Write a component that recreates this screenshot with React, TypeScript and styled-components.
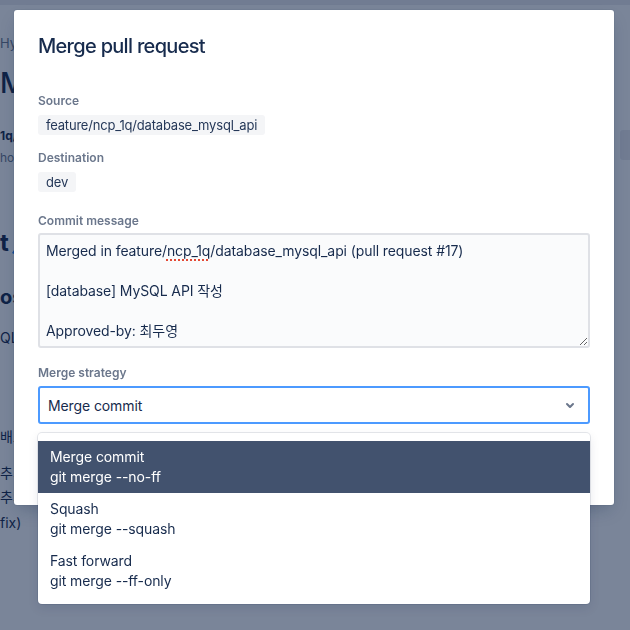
import React from "react";
import styled, { createGlobalStyle } from "styled-components";

const FONT = `Inter, "Noto Sans CJK KR", "Noto Sans", sans-serif`;

const GlobalStyle = createGlobalStyle`
  html, body { margin: 0; padding: 0; height: 100%; overflow: hidden; }
  body {
    font-family: ${FONT};
    color: #172b4d;
    background: #ffffff;
    -webkit-font-smoothing: antialiased;
  }
  * { box-sizing: border-box; }
`;

/* ---------- background page ---------- */

const Page = styled.div`
  height: 630px;
  display: flex;
  flex-direction: column;
  background: #ffffff;
`;

const TopBar = styled.div`
  height: 5px;
  background: #ebecf0;
`;

const Layout = styled.div`
  flex: 1;
  display: flex;
`;

const Main = styled.main`
  flex: 1;
  min-width: 0;
  overflow: hidden;
  display: flex;
  flex-direction: column;
`;

const Aside = styled.aside`
  width: 10px;
  overflow: hidden;
  padding-top: 125px;
`;

const SideButton = styled.div`
  width: 30px;
  height: 30px;
  border-radius: 3px;
  background: #ebecf0;
`;

const BgText = styled.div<{
  $size: number;
  $lh: number;
  $top: number;
  $weight?: number;
  $muted?: boolean;
}>`
  margin-top: ${(p) => p.$top}px;
  font-size: ${(p) => p.$size}px;
  line-height: ${(p) => p.$lh}px;
  font-weight: ${(p) => p.$weight ?? 400};
  color: ${(p) => (p.$muted ? "#6b778c" : "#172b4d")};
  white-space: nowrap;
  display: flex;
  align-items: flex-end;
`;

const Pencil = () => (
  <svg width="10" height="14" viewBox="0 0 10 14" style={{ marginLeft: 1, marginBottom: 3 }}>
    <path d="M2 13 L8 4 L10 6 L4 14 Z" fill="#2684ff" />
  </svg>
);

/* ---------- modal ---------- */

const Overlay = styled.div`
  position: fixed;
  inset: 0;
  background: rgba(9, 30, 66, 0.54);
  display: flex;
  justify-content: center;
  align-items: flex-start;
  padding: 10px 2px 0 0;
`;

const Modal = styled.section`
  width: 600px;
  background: #ffffff;
  border-radius: 3px;
  box-shadow: 0 0 0 1px rgba(9, 30, 66, 0.06), 0 8px 16px -4px rgba(9, 30, 66, 0.25);
  display: flex;
  flex-direction: column;
`;

const Header = styled.header`
  padding: 24px 24px 0;
`;

const Title = styled.h1`
  margin: 0;
  font-size: 20px;
  font-weight: 500;
  line-height: 24px;
  letter-spacing: -0.7px;
  color: #172b4d;
`;

const Body = styled.div`
  padding: 0 24px;
  display: flex;
  flex-direction: column;
`;

const Field = styled.div<{ $top: number }>`
  margin-top: ${(p) => p.$top}px;
  display: flex;
  flex-direction: column;
`;

const Label = styled.label<{ $gap: number }>`
  font-size: 12px;
  font-weight: 600;
  line-height: 16px;
  color: #6b778c;
  margin-bottom: ${(p) => p.$gap}px;
`;

const Tag = styled.span`
  align-self: flex-start;
  background: #f4f5f7;
  border-radius: 3px;
  padding: 0 8px;
  font-size: 13px;
  line-height: 20px;
  letter-spacing: -0.2px;
  color: #253858;
`;

const MessageBox = styled.div`
  height: 115px;
  background: #fafbfc;
  border: 2px solid #dfe1e6;
  border-radius: 3px;
  padding: 6px;
  font-size: 14px;
  line-height: 20px;
  letter-spacing: -0.1px;
  color: #172b4d;
  white-space: pre-wrap;
  overflow: hidden;
  resize: vertical;
`;

const Misspelled = styled.span`
  text-decoration: underline dotted #e34935;
  text-decoration-thickness: 2px;
  text-underline-offset: 3px;
`;

const SelectWrap = styled.div`
  position: relative;
`;

const Control = styled.div`
  height: 38px;
  border: 2px solid #4c9aff;
  border-radius: 3px;
  background: #ffffff;
  display: flex;
  align-items: center;
  padding-left: 8px;
  font-size: 14px;
  letter-spacing: -0.1px;
  color: #172b4d;
`;

const Value = styled.span`
  flex: 1;
`;

const Indicator = styled.span`
  display: flex;
  padding: 0 6px 0 8px;
  color: #6b778c;
`;

const Menu = styled.ul`
  position: absolute;
  top: calc(100% + 9px);
  left: 0;
  right: 0;
  margin: 0;
  padding: 8px 0 7px;
  list-style: none;
  background: #ffffff;
  border-radius: 4px;
  box-shadow: 0 0 0 1px rgba(9, 30, 66, 0.1), 0 4px 11px rgba(9, 30, 66, 0.1);
  z-index: 2;
`;

const Option = styled.li<{ $selected?: boolean }>`
  padding: 6px 12px;
  font-size: 14px;
  line-height: 20px;
  letter-spacing: -0.1px;
  background: ${(p) => (p.$selected ? "#42526e" : "transparent")};
  color: ${(p) => (p.$selected ? "#ffffff" : "#172b4d")};
`;

const Footer = styled.footer`
  display: flex;
  justify-content: flex-end;
  gap: 4px;
  padding: 25px 24px 24px;
`;

const Button = styled.button<{ $primary?: boolean }>`
  height: 32px;
  padding: 0 12px;
  border: none;
  border-radius: 3px;
  font-family: ${FONT};
  font-size: 14px;
  font-weight: 500;
  background: ${(p) => (p.$primary ? "#0052cc" : "transparent")};
  color: ${(p) => (p.$primary ? "#ffffff" : "#42526e")};
`;

const Chevron = () => (
  <svg width="24" height="24" viewBox="0 0 24 24" role="presentation">
    <path
      d="M8.292 10.293a1.009 1.009 0 000 1.419l2.939 2.965c.218.215.5.322.779.322s.556-.107.769-.322l2.93-2.955a1.01 1.01 0 000-1.419.987.987 0 00-1.406 0l-2.298 2.317-2.307-2.327a.99.99 0 00-1.406 0z"
      fill="currentColor"
    />
  </svg>
);

const options = [
  { title: "Merge commit", cmd: "git merge --no-ff", selected: true },
  { title: "Squash", cmd: "git merge --squash" },
  { title: "Fast forward", cmd: "git merge --ff-only" },
];

export default function App() {
  return (
    <>
      <GlobalStyle />
      <Page>
        <TopBar />
        <Layout>
          <Main>
            <BgText $size={13} $lh={20} $top={28} $muted>Hy</BgText>
            <BgText $size={28} $lh={32} $top={14} $weight={500}>M</BgText>
            <BgText $size={12} $lh={16} $top={29} $weight={700}>1q/</BgText>
            <BgText $size={12} $lh={16} $top={6} $muted>ho</BgText>
            <BgText $size={24} $lh={28} $top={63} $weight={700}>
              t<Pencil />
            </BgText>
            <BgText $size={20} $lh={24} $top={28} $weight={700}>os</BgText>
            <BgText $size={14} $lh={20} $top={19}>QL</BgText>
            <BgText $size={14} $lh={20} $top={79}>배포</BgText>
            <BgText $size={14} $lh={20} $top={16}>추가</BgText>
            <BgText $size={14} $lh={20} $top={4}>추가</BgText>
            <BgText $size={14} $lh={20} $top={6}>fix)</BgText>
          </Main>
          <Aside>
            <SideButton />
          </Aside>
        </Layout>
      </Page>

      <Overlay>
        <Modal role="dialog" aria-label="Merge pull request">
          <Header>
            <Title>Merge pull request</Title>
          </Header>
          <Body>
            <Field $top={35}>
              <Label $gap={6}>Source</Label>
              <Tag>feature/ncp_1q/database_mysql_api</Tag>
            </Field>
            <Field $top={15}>
              <Label $gap={6}>Destination</Label>
              <Tag>dev</Tag>
            </Field>
            <Field $top={21}>
              <Label $gap={4}>Commit message</Label>
              <MessageBox>
                Merged in feature/<Misspelled>ncp_1q</Misspelled>/database_mysql_api (pull request #17)
                {"\n\n"}[database] MySQL API 작성{"\n\n"}Approved-by: 최두영
              </MessageBox>
            </Field>
            <Field $top={17}>
              <Label $gap={5}>Merge strategy</Label>
              <SelectWrap>
                <Control>
                  <Value>Merge commit</Value>
                  <Indicator>
                    <Chevron />
                  </Indicator>
                </Control>
                <Menu role="listbox">
                  {options.map((o) => (
                    <Option key={o.title} $selected={o.selected} role="option">
                      <div>{o.title}</div>
                      <div>{o.cmd}</div>
                    </Option>
                  ))}
                </Menu>
              </SelectWrap>
            </Field>
          </Body>
          <Footer>
            <Button $primary>Merge</Button>
            <Button>Cancel</Button>
          </Footer>
        </Modal>
      </Overlay>
    </>
  );
}
